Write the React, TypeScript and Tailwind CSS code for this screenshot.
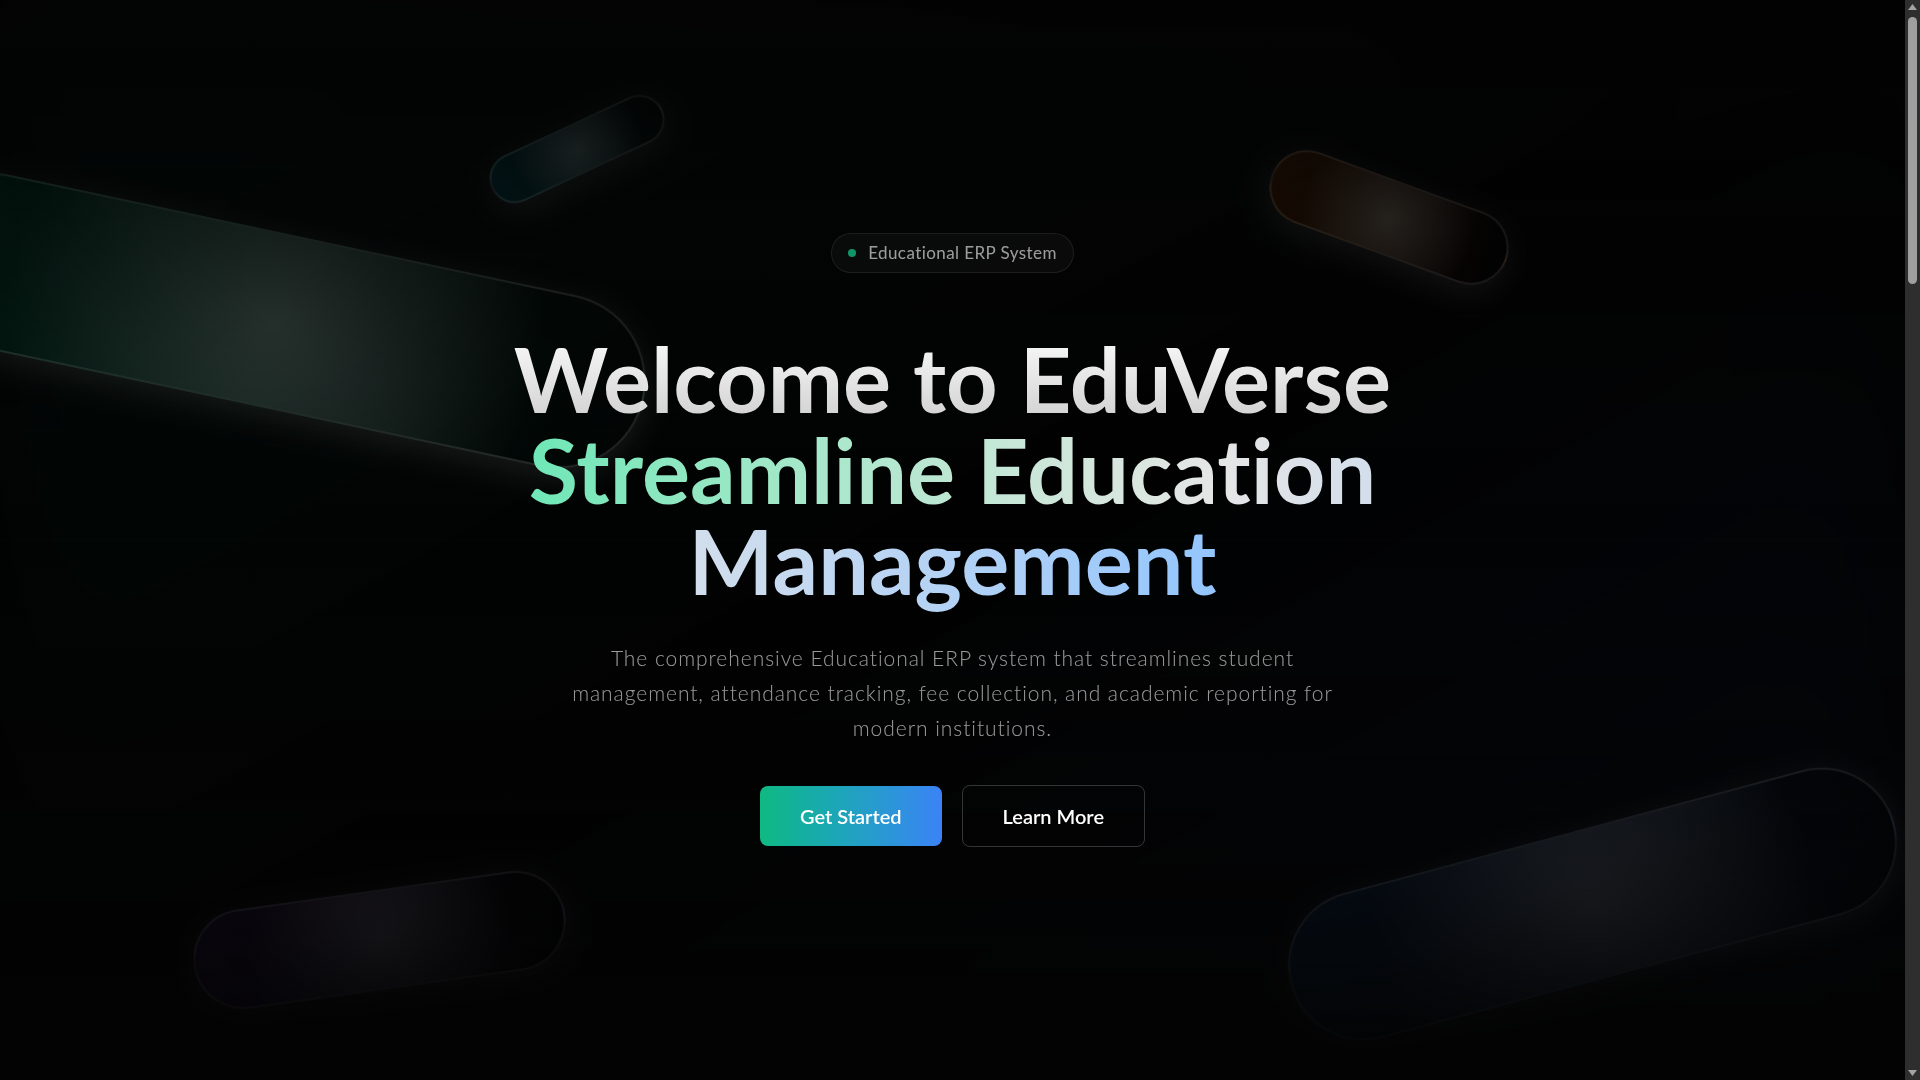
import React from 'react';

type ShapeProps = {
  className: string;
  gradient: string;
};

// Floating glass pill used in the hero background
function ElegantShape({ className, gradient }: ShapeProps) {
  return (
    <div className={`absolute ${className}`}>
      <div
        className={`absolute inset-0 rounded-full bg-linear-to-r to-transparent ${gradient} border-2 border-white/[0.15] shadow-[0_8px_32px_0_rgba(255,255,255,0.1)] backdrop-blur-[2px] after:absolute after:inset-0 after:rounded-full after:bg-[radial-gradient(circle_at_50%_50%,rgba(255,255,255,0.2),transparent_70%)]`}
      />
    </div>
  );
}

// Window scrollbar on the right edge of the screenshot
function ScrollBar() {
  return (
    <div className="flex w-[15px] flex-col items-center bg-[#2e2e2e] pt-[4px] pb-[4px]">
      <svg width="9" height="6" viewBox="0 0 9 6">
        <path d="M4.5 0 L9 6 L0 6 Z" fill="#a3a3a3" />
      </svg>
      <div className="mt-[7px] h-[267px] w-[9px] rounded-full bg-[#9f9f9f]" />
      <div className="flex-1" />
      <svg width="9" height="6" viewBox="0 0 9 6">
        <path d="M0 0 L9 0 L4.5 6 Z" fill="#a3a3a3" />
      </svg>
    </div>
  );
}

export default function App() {
  return (
    <div className="flex h-screen overflow-hidden bg-[#030303] font-[Lato,sans-serif] [font-variant-ligatures:none]">
      <section className="relative flex h-screen flex-1 items-center justify-center overflow-hidden bg-[#030303]">
        <div className="absolute inset-0 bg-linear-to-br from-emerald-500/[0.05] via-transparent to-blue-500/[0.05] blur-3xl" />

        <div className="absolute inset-0 overflow-hidden">
          <ElegantShape
            gradient="from-emerald-500/[0.15]"
            className="left-[-104px] top-[233px] h-[175px] w-[756px] rotate-[12deg]"
          />
          <ElegantShape
            gradient="from-blue-500/[0.15]"
            className="left-[1280px] top-[829px] h-[150px] w-[625px] rotate-[-15deg]"
          />
          <ElegantShape
            gradient="from-violet-500/[0.15]"
            className="left-[192px] top-[890px] h-[100px] w-[375px] rotate-[-8deg]"
          />
          <ElegantShape
            gradient="from-orange-500/[0.15]"
            className="left-[1264px] top-[180px] h-[75px] w-[250px] rotate-[20deg]"
          />
          <ElegantShape
            gradient="from-cyan-500/[0.15]"
            className="left-[483px] top-[124px] h-[50px] w-[188px] rotate-[-25deg]"
          />
        </div>

        <div className="relative z-10 flex flex-col items-center px-4 text-center">
          <div className="mb-[60px] inline-flex items-center gap-3 rounded-full border border-white/[0.08] bg-white/[0.03] px-4 py-1.5">
            <span className="h-2 w-2 rounded-full bg-[#10b981]/80" />
            <span className="text-[17px] tracking-wide text-white/60">Educational ERP System</span>
          </div>

          <h1 className="mb-[34px] text-[90px] font-bold leading-[91px] tracking-normal">
            <span className="bg-linear-to-b from-white to-white/80 bg-clip-text text-transparent">
              Welcome to EduVerse
            </span>
            <br />
            <span className="bg-linear-to-r from-[#6ee7b7] via-white/90 to-[#93c5fd] bg-clip-text text-transparent">
              Streamline Education
              <br />
              Management
            </span>
          </h1>

          <p className="mb-[40px] max-w-[785px] text-[21px] leading-[35px] font-light tracking-[0.045em] text-white/60">
            The comprehensive Educational ERP system that streamlines student management, attendance tracking, fee
            collection, and academic reporting for modern institutions.
          </p>

          <div className="flex items-center gap-5">
            <button className="rounded-lg bg-linear-to-r from-[#10b981] to-[#3b82f6] px-10 py-4 text-xl leading-7 font-semibold text-white">
              Get Started
            </button>
            <button className="rounded-lg border border-white/20 bg-transparent px-10 py-4 text-xl leading-7 font-semibold text-white">
              Learn More
            </button>
          </div>
        </div>

        <div className="pointer-events-none absolute inset-0 bg-linear-to-t from-[#030303] via-transparent to-[#030303]/80" />
      </section>

      <ScrollBar />
    </div>
  );
}
